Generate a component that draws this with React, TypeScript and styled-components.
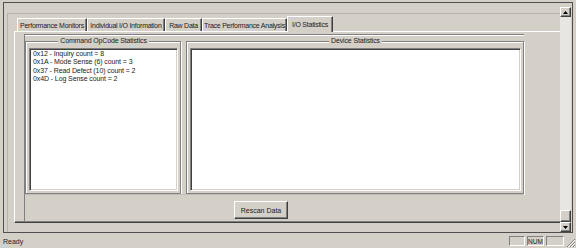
import React from "react";
import styled, { createGlobalStyle } from "styled-components";

//////////////////////// GLOBAL ////////////////////////

const GlobalStyle = createGlobalStyle`
  html, body {
    margin: 0;
    padding: 0;
    background: #d4d0c8;
  }
  * {
    box-sizing: border-box;
  }
`;

//////////////////////// STYLED-COMPONENTS ////////////////////////

const Screen = styled.div`
  width: 576px;
  height: 248px;
  background: #d4d0c8;
  display: flex;
  flex-direction: column;
  font-family: "Liberation Sans", Arial, sans-serif;
  font-size: 7px;
  color: #222;
  overflow: hidden;
`;

const Frame = styled.div`
  margin: 2px 3px 0 3px;
  height: 231px;
  border: 1px solid #505050;
  display: flex;
`;

const Body = styled.div`
  flex: 1;
  padding: 10px 0 0 3px;
  min-width: 0;
  overflow: hidden;
`;

const Sheet = styled.div`
  height: 100%;
  width: 570px;
  border-left: 1px solid #b8b4ac;
  border-top: 1px solid #b8b4ac;
  padding-left: 6px;
`;

const TabStrip = styled.div`
  display: flex;
  align-items: flex-end;
  height: 17px;
  padding-left: 3px;
`;

const Tab = styled.div<{ $active?: boolean }>`
  height: ${(p) => (p.$active ? 16 : 13)}px;
  padding: 0 2px;
  display: flex;
  align-items: center;
  justify-content: center;
  white-space: nowrap;
  letter-spacing: -0.25px;
  border-top: 1px solid #ffffff;
  border-left: 1px solid #ffffff;
  border-right: 1px solid #404040;
  background: #d4d0c8;
  position: relative;
  margin-bottom: ${(p) => (p.$active ? -1 : 0)}px;
  z-index: ${(p) => (p.$active ? 1 : 0)};
  box-shadow: inset -1px 0 0 #808080;
`;

const Panel = styled.div`
  width: 560px;
  height: 192px;
  border-top: 1px solid #ffffff;
  border-left: 1px solid #ffffff;
  border-bottom: 1px solid #404040;
  box-shadow: inset 0 -1px 0 #808080;
  padding: 2px 0 0 9px;
`;

const InnerFrame = styled.div`
  width: 500px;
  height: 188px;
  border-top: 1px solid #808080;
  border-left: 1px solid #808080;
  box-shadow: inset 0 1px 0 #ffffff;
  display: flex;
  flex-direction: column;
`;

const GroupRow = styled.div`
  display: flex;
  gap: 5px;
  padding-top: 2px;
  height: 159px;
`;

const Group = styled.fieldset<{ $w: number }>`
  width: ${(p) => p.$w}px;
  margin: 0;
  padding: 0 2px 2px 3px;
  border: 1px solid #808080;
  box-shadow: inset 1px 1px 0 #ffffff, 1px 1px 0 #ffffff;
  display: flex;
  flex-direction: column;
  min-width: 0;
`;

const Caption = styled.legend`
  margin: 0 auto;
  padding: 0 2px;
  background: #d4d0c8;
  line-height: 8px;
  height: 8px;
  letter-spacing: -0.15px;
`;

const ListBox = styled.div`
  flex: 1;
  margin-top: 3px;
  background: #ffffff;
  border-top: 1px solid #808080;
  border-left: 1px solid #808080;
  border-right: 1px solid #ffffff;
  border-bottom: 1px solid #ffffff;
  box-shadow: inset 1px 1px 0 #404040, inset -1px -1px 0 #d4d0c8;
  padding: 1px 0 0 3px;
`;

const ListLine = styled.div`
  height: 8.3px;
  line-height: 8.3px;
  white-space: nowrap;
  letter-spacing: -0.1px;
`;

const ButtonBar = styled.div`
  flex: 1;
  border-top: 1px solid #c0bcb4;
  display: flex;
  padding: 6px 0 0 209px;
`;

const Button = styled.div`
  width: 54px;
  height: 18px;
  display: flex;
  align-items: center;
  justify-content: center;
  border-top: 1px solid #ffffff;
  border-left: 1px solid #ffffff;
  border-right: 1px solid #404040;
  border-bottom: 1px solid #404040;
  box-shadow: inset -1px -1px 0 #808080;
`;

const VScroll = styled.div`
  width: 11px;
  margin: 4px 1px 0 0;
  display: flex;
  flex-direction: column;
  background: #e8e6e2;
`;

const ScrollBtn = styled.div`
  height: 10px;
  display: flex;
  align-items: center;
  justify-content: center;
  background: #d4d0c8;
  border-top: 1px solid #ffffff;
  border-left: 1px solid #ffffff;
  border-right: 1px solid #404040;
  border-bottom: 1px solid #404040;
  box-shadow: inset -1px -1px 0 #808080;
`;

const Track = styled.div`
  flex: 1;
  display: flex;
  flex-direction: column;
  justify-content: flex-end;
`;

const Thumb = styled(ScrollBtn)`
  height: 12px;
`;

const StatusBar = styled.div`
  flex: 1;
  display: flex;
  align-items: center;
  padding: 1px 0 0 3px;
`;

const StatusText = styled.div`
  flex: 1;
`;

const Pane = styled.div<{ $w: number }>`
  width: ${(p) => p.$w}px;
  height: 10px;
  margin-left: 2px;
  border-top: 1px solid #808080;
  border-left: 1px solid #808080;
  border-right: 1px solid #ffffff;
  border-bottom: 1px solid #ffffff;
  display: flex;
  align-items: center;
  justify-content: center;
  font-size: 6.5px;
`;

const Grip = styled.svg`
  width: 12px;
  height: 12px;
  align-self: flex-end;
`;

//////////////////////// DATA ////////////////////////

const tabs = [
  { label: "Performance Monitors", w: 70 },
  { label: "Individual I/O Information", w: 78 },
  { label: "Raw Data", w: 37 },
  { label: "Trace Performance Analysis", w: 85 },
  { label: "I/O Statistics", w: 46, active: true },
];

const opcodes = [
  "0x12 - Inquiry count = 8",
  "0x1A - Mode Sense (6) count = 3",
  "0x37 - Read Defect (10) count = 2",
  "0x4D - Log Sense count = 2",
];

//////////////////////// COMPONENT ////////////////////////

const Arrow = ({ up }: { up?: boolean }) => (
  <svg width="5" height="3" viewBox="0 0 5 3">
    <path d={up ? "M2.5 0 L5 3 L0 3 Z" : "M0 0 L5 0 L2.5 3 Z"} fill="#000" />
  </svg>
);

const App = () => {
  return (
    <Screen>
      <GlobalStyle />
      <Frame>
        <Body>
          <Sheet>
            <TabStrip>
              {tabs.map((t) => (
                <Tab key={t.label} $active={t.active} style={{ width: t.w }}>
                  {t.label}
                </Tab>
              ))}
            </TabStrip>
            <Panel>
              <InnerFrame>
                <GroupRow>
                  <Group $w={156}>
                    <Caption>Command OpCode Statistics</Caption>
                    <ListBox>
                      {opcodes.map((o) => (
                        <ListLine key={o}>{o}</ListLine>
                      ))}
                    </ListBox>
                  </Group>
                  <Group $w={338}>
                    <Caption>Device Statistics</Caption>
                    <ListBox />
                  </Group>
                </GroupRow>
                <ButtonBar>
                  <Button>Rescan Data</Button>
                </ButtonBar>
              </InnerFrame>
            </Panel>
          </Sheet>
        </Body>
        <VScroll>
          <ScrollBtn>
            <Arrow up />
          </ScrollBtn>
          <Track>
            <Thumb />
          </Track>
          <ScrollBtn>
            <Arrow />
          </ScrollBtn>
        </VScroll>
      </Frame>
      <StatusBar>
        <StatusText>Ready</StatusText>
        <Pane $w={16} />
        <Pane $w={17}>NUM</Pane>
        <Pane $w={18} />
        <Grip viewBox="0 0 12 12">
          <path d="M11 3 L3 11 M11 6 L6 11 M11 9 L9 11" stroke="#808080" strokeWidth="1" />
          <path d="M11 4 L4 11 M11 7 L7 11 M11 10 L10 11" stroke="#ffffff" strokeWidth="1" />
        </Grip>
      </StatusBar>
    </Screen>
  );
};

//////////////////////// EXPORT ////////////////////////

export default App;
